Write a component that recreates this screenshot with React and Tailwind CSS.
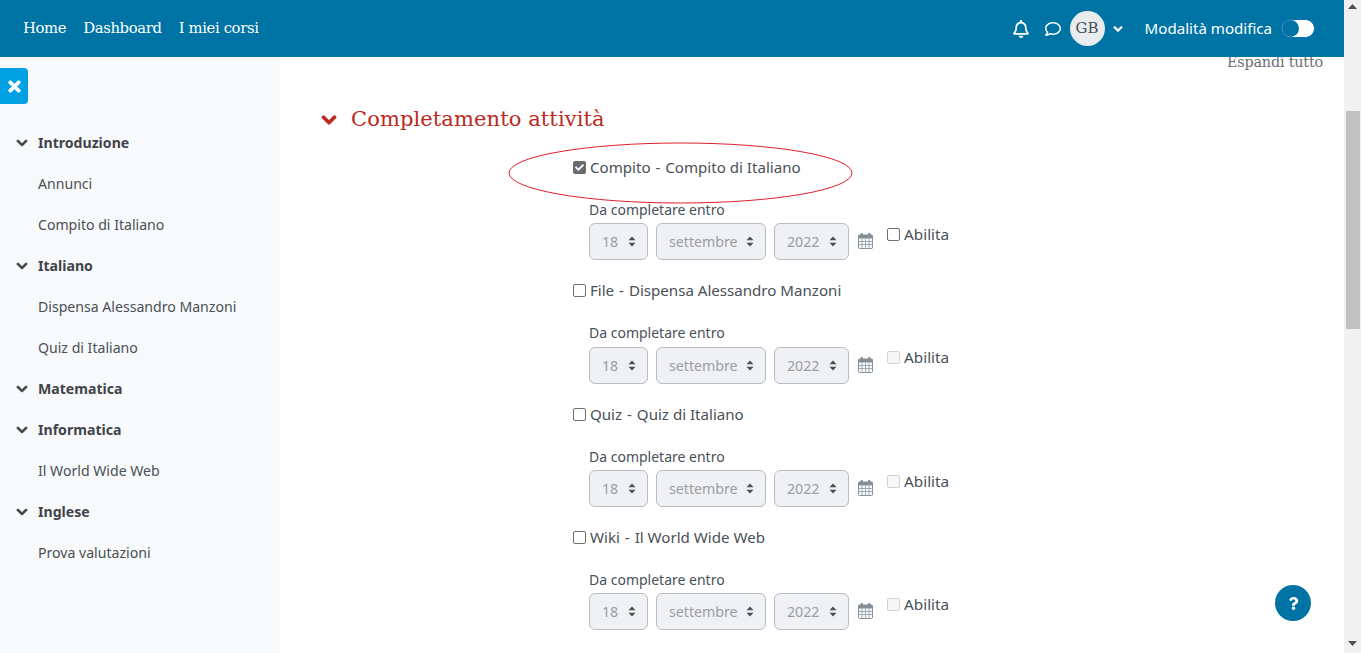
import { FaChevronDown, FaTimes, FaRegBell, FaRegComment, FaQuestion, FaCheck } from 'react-icons/fa'

const NAV = ['Home', 'Dashboard', 'I miei corsi']

const SIDEBAR = [
  { label: 'Introduzione', section: true },
  { label: 'Annunci' },
  { label: 'Compito di Italiano' },
  { label: 'Italiano', section: true },
  { label: 'Dispensa Alessandro Manzoni' },
  { label: 'Quiz di Italiano' },
  { label: 'Matematica', section: true },
  { label: 'Informatica', section: true },
  { label: 'Il World Wide Web' },
  { label: 'Inglese', section: true },
  { label: 'Prova valutazioni' },
]

const ACTIVITIES = [
  { type: 'Compito', name: 'Compito di Italiano', checked: true, enabled: true },
  { type: 'File', name: 'Dispensa Alessandro Manzoni' },
  { type: 'Quiz', name: 'Quiz di Italiano' },
  { type: 'Wiki', name: 'Il World Wide Web' },
]

function SortArrows() {
  return (
    <svg width="8" height="11" viewBox="0 0 8 11" className="shrink-0">
      <path d="M4 0.5 L7.5 4.2 H0.5 Z M4 10.5 L0.5 6.8 H7.5 Z" fill="#495057" />
    </svg>
  )
}

function CalendarIcon() {
  return (
    <svg width="15" height="16" viewBox="0 0 15 16" className="ml-[9px] mt-[10px] shrink-0">
      <rect x="0.5" y="2" width="14" height="13.5" rx="1" fill="#fbfcfd" stroke="#868f96" />
      <rect x="0.5" y="2" width="14" height="3.5" fill="#868f96" />
      <path d="M0.5 8.5H14.5M0.5 11.5H14.5M4 5.5V15.5M7.5 5.5V15.5M11 5.5V15.5" stroke="#a0a9b0" strokeWidth="1" />
      <rect x="2.5" y="0" width="2.5" height="4" rx="1" fill="#868f96" />
      <rect x="10" y="0" width="2.5" height="4" rx="1" fill="#868f96" />
    </svg>
  )
}

function DisabledSelect({ value, width }) {
  return (
    <div className={`${width} h-[37px] flex items-center justify-between pl-[12px] pr-[11px] rounded-md border border-[#b9bdc3] bg-[#eff1f4] text-[#9b9ea3] text-[14.2px]`}>
      <span>{value}</span>
      <SortArrows />
    </div>
  )
}

function Checkbox({ checked, enabled }) {
  if (checked) {
    return (
      <span className="w-[13px] h-[13px] rounded-[2px] bg-[#6b6b6b] flex items-center justify-center shrink-0">
        <FaCheck className="text-white" size={9} />
      </span>
    )
  }
  return (
    <span className={`w-[13px] h-[13px] rounded-[2px] border shrink-0 ${enabled ? 'border-[#6f6f6f] bg-white' : 'border-[#d2d2d2] bg-[#f7f7f7]'}`} />
  )
}

function ActivityRow({ type, name, checked, enabled }) {
  return (
    <div className="h-[123.3px]">
      <div className="h-[22px] flex items-center">
        <Checkbox checked={checked} enabled />
        <span className="ml-[4px] text-[15.1px]">{type} <span className="mx-[1px]">-</span> {name}</span>
      </div>
      <div className="ml-[16px] mt-[20px] h-[22px] flex items-center text-[14px]">Da completare entro</div>
      <div className="ml-[16px] mt-[3px] flex items-start">
        <div className="flex gap-2">
          <DisabledSelect value="18" width="w-[59px]" />
          <DisabledSelect value="settembre" width="w-[110px]" />
          <DisabledSelect value="2022" width="w-[75px]" />
        </div>
        <CalendarIcon />
        <div className="ml-[14px] h-[22px] flex items-center">
          <Checkbox enabled={enabled} />
          <span className="ml-[4px] text-[15.3px]">Abilita</span>
        </div>
      </div>
    </div>
  )
}

export default function App() {
  return (
    <div className="relative h-screen flex overflow-hidden bg-white text-[#495057] font-['Noto_Sans',sans-serif]">
      <div className="relative flex-1 min-w-0 flex">
        {/* Top bar */}
        <header className="absolute top-0 inset-x-0 z-10 h-[57px] bg-[#0073a5] flex items-center text-white">
          <nav className="flex gap-[17px] pl-[23px] font-['DejaVu_Serif',serif] text-[14.8px] tracking-[-0.35px]">
            {NAV.map((n) => <span key={n}>{n}</span>)}
          </nav>
          <div className="ml-auto flex items-center pr-[29px]">
            <FaRegBell size={18} className="mr-[-1px]" />
            <FaRegComment size={16} className="ml-[16px]" />
            <div className="ml-[9px] w-[35px] h-[35px] rounded-full bg-[#e9ecef] text-[#495057] flex items-center justify-center font-['DejaVu_Serif',serif] text-[15px]">GB</div>
            <FaChevronDown size={10} stroke="currentColor" strokeWidth={40} className="ml-[8px]" />
            <span className="ml-[22px] text-[15.1px]">Modalità modifica</span>
            <div className="ml-[9px] w-[34px] h-[19px] rounded-full bg-white border border-[#0f6cbf] flex items-center">
              <span className="w-[17px] h-[17px] rounded-full bg-[#0073a5]" />
            </div>
          </div>
        </header>

        {/* Course index */}
        <aside className="w-[280px] shrink-0 bg-[#f8f9fa] pt-[68px]">
          <div className="w-[28px] h-[36px] rounded-r bg-[#00a0e3] flex items-center justify-center text-white">
            <FaTimes size={17} stroke="currentColor" strokeWidth={30} />
          </div>
          <ul className="mt-[18px]">
            {SIDEBAR.map(({ label, section }) => (
              <li key={label} className="h-[41px] flex items-center text-[14.1px]">
                <span className="w-[38px] pl-[16px] shrink-0">
                  {section && <FaChevronDown size={12} stroke="currentColor" strokeWidth={40} className="text-[#3f444a]" />}
                </span>
                <span className={section ? 'font-bold text-[#3f444a]' : ''}>{label}</span>
              </li>
            ))}
          </ul>
        </aside>

        {/* Main content */}
        <main className="relative flex-1 min-w-0 pt-[52px]">
          <div className="h-[20px] pr-[21px] text-right font-['DejaVu_Serif',serif] text-[14.4px] tracking-[-0.2px] text-[#6b6f73] leading-[20px]">Espandi tutto</div>
          <div className="mt-[34px] ml-[41px] flex items-center h-[28px] text-[#b92a22]">
            <FaChevronDown size={16} stroke="currentColor" strokeWidth={40} />
            <h2 className="ml-[16px] font-['DejaVu_Serif',serif] text-[21px] tracking-[0.1px] -translate-x-[2px]">Completamento attività</h2>
          </div>
          <div className="mt-[22.45px] ml-[293px]">
            {ACTIVITIES.map((a) => <ActivityRow key={a.type} {...a} />)}
          </div>
          {/* hand-drawn annotation */}
          <svg className="absolute left-[228px] top-[142px]" width="346" height="62" viewBox="0 0 346 62">
            <ellipse cx="172.5" cy="31" rx="171.5" ry="30" fill="none" stroke="#e0202c" strokeWidth="1" />
          </svg>
          <button className="absolute right-[33px] bottom-[32px] w-[36px] h-[36px] rounded-full bg-[#0073a5] text-white flex items-center justify-center">
            <FaQuestion size={13} />
          </button>
        </main>
      </div>

      {/* Scrollbar */}
      <div className="w-[17px] shrink-0 bg-[#f1f1f1] flex flex-col items-center">
        <svg width="9" height="5" viewBox="0 0 9 5" className="mt-[4px] shrink-0"><path d="M4.5 0 L9 5 H0 Z" fill="#505050" /></svg>
        <div className="mt-[102px] w-[14px] h-[218px] bg-[#c1c1c1]" />
        <svg width="9" height="5" viewBox="0 0 9 5" className="mt-auto mb-[7px] shrink-0"><path d="M0 0 H9 L4.5 5 Z" fill="#505050" /></svg>
      </div>
    </div>
  )
}
